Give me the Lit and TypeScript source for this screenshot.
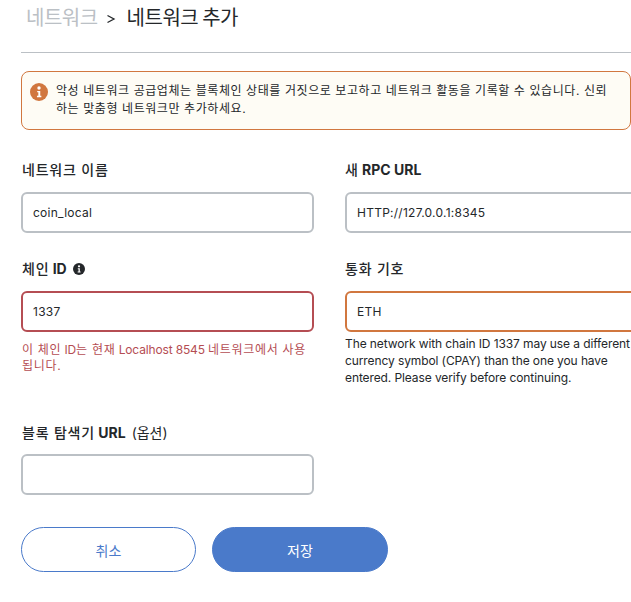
import { LitElement, html, css } from 'lit';
import { customElement } from 'lit/decorators.js';

@customElement('app-root')
export class AppRoot extends LitElement {
  static styles = css`
    :host {
      display: block;
      width: 631px;
      height: 602px;
      overflow: hidden;
      background: #fff;
      color: #24272a;
      font-family: 'Inter', 'Noto Sans CJK KR', sans-serif;
    }

    .page {
      padding: 0 0 0 21px;
    }

    .crumbs {
      display: flex;
      align-items: center;
      height: 34px;
      font-size: 20px;
      line-height: 34px;
      letter-spacing: -0.5px;
      font-family: 'Noto Sans CJK KR', sans-serif;
    }
    .crumbs .parent {
      margin-left: 5px;
      color: #bbc0c5;
    }
    .crumbs .sep {
      margin: 4px 11px 0 8px;
      display: flex;
    }
    .crumbs .sep svg {
      display: block;
    }

    .divider {
      height: 1px;
      margin-top: 18px;
      background: #bbc0c5;
    }

    .alert {
      box-sizing: border-box;
      display: flex;
      align-items: flex-start;
      gap: 8px;
      width: 610px;
      height: 59px;
      margin-top: 18px;
      padding: 10px 8px;
      background: #fefcf5;
      border: 1px solid #d1773f;
      border-radius: 8px;
      font-size: 12px;
      line-height: 18px;
      letter-spacing: 0.58px;
    }
    .alert svg {
      flex: none;
      margin-top: 1px;
    }
    .alert p {
      margin: 0;
      width: 556px;
    }

    .form {
      display: grid;
      grid-template-columns: 293px 293px;
      column-gap: 31px;
      margin-top: 30px;
    }

    .field {
      display: flex;
      flex-direction: column;
    }

    label {
      display: flex;
      align-items: center;
      gap: 6px;
      height: 20px;
      margin-bottom: 12px;
      padding-left: 1px;
      font-size: 14px;
      line-height: 20px;
      font-weight: 700;
    }
    .field.right label {
      padding-left: 0;
    }
    label .ko {
      font-weight: 500;
      letter-spacing: 0.8px;
    }
    label .opt {
      font-weight: 400;
      letter-spacing: 0;
    }

    .input {
      box-sizing: border-box;
      height: 41px;
      padding: 0 10px;
      display: flex;
      align-items: center;
      border: 2px solid #bbc0c5;
      border-radius: 6px;
      font-size: 12px;
      letter-spacing: 0.25px;
      color: #24272a;
    }
    .input.error {
      border-color: #b54d53;
    }
    .input.warning {
      border-color: #d1773f;
    }

    .help {
      margin: 10px 0 0;
      font-size: 12px;
      line-height: 16px;
    }
    .help.error {
      padding-left: 1px;
      color: #b54d53;
      letter-spacing: -0.15px;
    }
    .help.error .ko {
      display: inline-block;
      letter-spacing: 0.7px;
    }
    .help.warning {
      margin-top: 3px;
      line-height: 17px;
      letter-spacing: -0.1px;
    }

    .row-2 {
      margin-top: 26px;
    }
    .row-3 {
      margin-top: 37px;
    }
    .row-3 label {
      margin-bottom: 11px;
    }

    .actions {
      display: flex;
      gap: 16px;
      margin-top: 32px;
    }
    button {
      box-sizing: border-box;
      height: 45px;
      border-radius: 23px;
      font-family: inherit;
      font-size: 14px;
      padding: 0;
    }
    .cancel {
      width: 175px;
      background: #fff;
      border: 1px solid #4a7aca;
      color: #4a7aca;
    }
    .save {
      width: 176px;
      background: #4a7aca;
      border: 1px solid #4a7aca;
      color: #fff;
    }
  `;

  private infoIcon(size: number, color: string) {
    return html`<svg width=${size} height=${size} viewBox="0 0 16 16">
      <circle cx="8" cy="8" r="8" fill=${color}></circle>
      <circle cx="8" cy="4.4" r="1.5" fill="#fff"></circle>
      <path d="M6.4 7h2.7v4.4h1v1.3H6.2v-1.3h1.2V8.3h-1z" fill="#fff"></path>
    </svg>`;
  }

  render() {
    return html`
      <div class="page">
        <div class="crumbs">
          <span class="parent">네트워크</span>
          <span class="sep">
            <svg width="10" height="10" viewBox="0 0 10 10">
              <path d="M1.5 1.5 8 5 1.5 8.5" fill="none" stroke="#24272a" stroke-width="1.3"></path>
            </svg>
          </span>
          <span>네트워크 추가</span>
        </div>
        <div class="divider"></div>

        <div class="alert">
          ${this.infoIcon(18, '#d1773f')}
          <p>악성 네트워크 공급업체는 블록체인 상태를 거짓으로 보고하고 네트워크 활동을 기록할 수 있습니다. 신뢰하는 맞춤형 네트워크만 추가하세요.</p>
        </div>

        <div class="form">
          <div class="field">
            <label><span class="ko">네트워크 이름</span></label>
            <div class="input">coin_local</div>
          </div>
          <div class="field right">
            <label><span><span class="ko">새</span> RPC URL</span></label>
            <div class="input">HTTP://127.0.0.1:8345</div>
          </div>

          <div class="field row-2">
            <label><span><span class="ko">체인</span> ID</span> ${this.infoIcon(12, '#24272a')}</label>
            <div class="input error">1337</div>
            <p class="help error"><span class="ko">이 체인</span> ID<span class="ko">는 현재</span> Localhost 8545 <span class="ko">네트워크에서 사용</span><span class="ko">됩니다.</span></p>
          </div>
          <div class="field right row-2">
            <label><span class="ko">통화 기호</span></label>
            <div class="input warning">ETH</div>
            <p class="help warning">The network with chain ID 1337 may use a different currency symbol (CPAY) than the one you have entered. Please verify before continuing.</p>
          </div>

          <div class="field row-3">
            <label><span><span class="ko">블록 탐색기</span> URL</span> <span class="opt ko">(옵션)</span></label>
            <div class="input"></div>
          </div>
        </div>

        <div class="actions">
          <button class="cancel">취소</button>
          <button class="save">저장</button>
        </div>
      </div>
    `;
  }
}
